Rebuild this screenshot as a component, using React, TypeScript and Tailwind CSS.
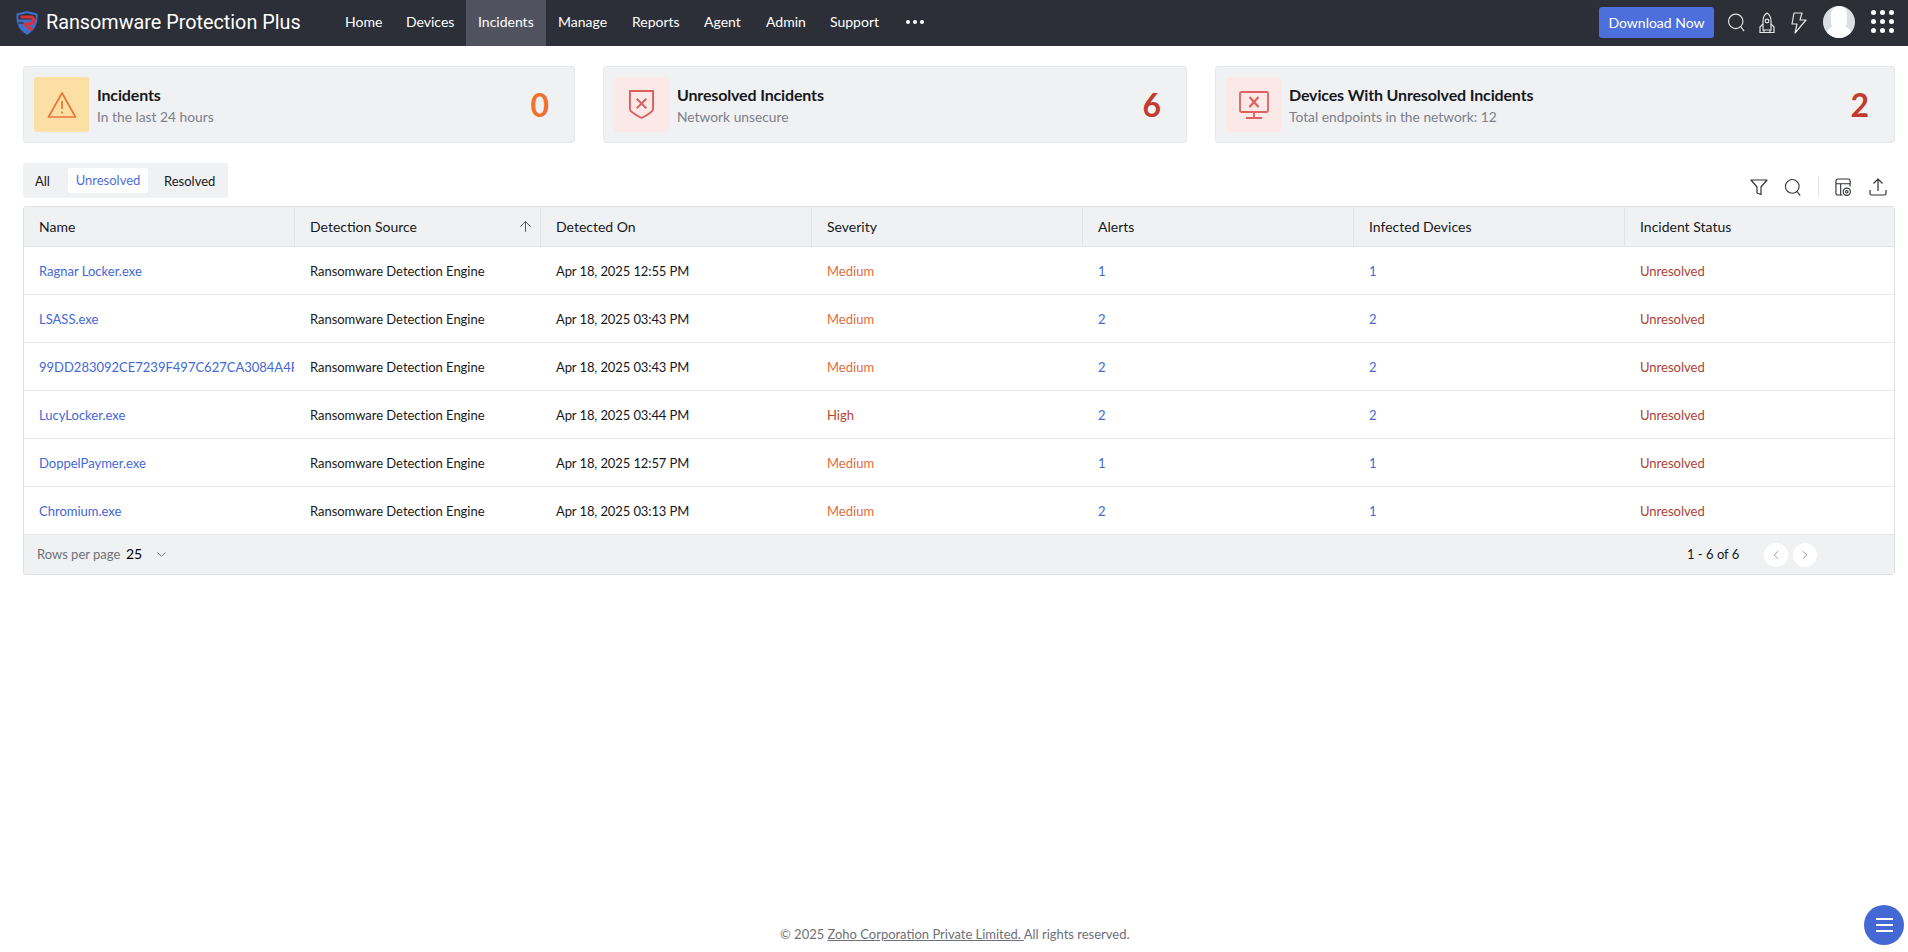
import React from "react";
import { ChevronDown, ChevronLeft, ChevronRight, ArrowUp } from "lucide-react";

const nav: [string, number][] = [["Home", 345], ["Devices", 406], ["Incidents", 478], ["Manage", 558], ["Reports", 632], ["Agent", 704], ["Admin", 766], ["Support", 830]];

const rows = [
  ["Ragnar Locker.exe", "Apr 18, 2025 12:55 PM", "Medium", "1", "1"],
  ["LSASS.exe", "Apr 18, 2025 03:43 PM", "Medium", "2", "2"],
  ["99DD283092CE7239F497C627CA3084A4F", "Apr 18, 2025 03:43 PM", "Medium", "2", "2"],
  ["LucyLocker.exe", "Apr 18, 2025 03:44 PM", "High", "2", "2"],
  ["DoppelPaymer.exe", "Apr 18, 2025 12:57 PM", "Medium", "1", "1"],
  ["Chromium.exe", "Apr 18, 2025 03:13 PM", "Medium", "2", "1"],
];

const cols = ["Name", "Detection Source", "Detected On", "Severity", "Alerts", "Infected Devices", "Incident Status"];
const widths = ["w-[270px]", "w-[246px]", "w-[271px]", "w-[271px]", "w-[271px]", "w-[271px]", "w-[271px]"];

function Search({ className }: { className: string }) {
  return (
    <svg viewBox="0 0 20 20" fill="none" stroke="currentColor" strokeWidth="1.2" className={className}>
      <circle cx="9.2" cy="8.8" r="7.6" />
      <path d="M14.6 14.6 18 19" />
    </svg>
  );
}

function StatCard({ x, w, boxBg, icon, title, sub, value, valueColor }: { x: string; w: string; boxBg: string; icon: React.ReactNode; title: string; sub: string; value: string; valueColor: string }) {
  return (
    <div className={`absolute top-[66px] h-[77px] ${x} ${w} rounded-[3px] border border-[#e6e8eb] bg-[#f0f1f3]`}>
      <div className={`absolute left-[10px] top-[10px] flex h-[55px] w-[55px] items-center justify-center rounded-[3px] ${boxBg}`}>{icon}</div>
      <div className="absolute left-[73px] top-[17px] text-[16px] leading-[22px] font-bold tracking-[-0.15px] text-[#17181c]">{title}</div>
      <div className="absolute left-[73px] top-[40px] text-[13.8px] leading-[20px] text-[#7d808a]">{sub}</div>
      <div className={`absolute right-[25px] top-[18px] text-[32px] leading-[40px] font-bold ${valueColor}`}>{value}</div>
    </div>
  );
}

export default function App() {
  return (
    <div className="relative h-[952px] w-[1908px] overflow-hidden bg-white text-[13px] text-[#17181c] [font-family:Lato,sans-serif]">
      <header className="absolute left-0 top-0 h-[46px] w-full bg-[#2c2f38] text-white">
        <svg viewBox="0 0 24 26" className="absolute left-[15px] top-[10px] h-[26px] w-[24px]" fill="none">
          <path d="M1.500 3.500 12 1l10.500 2.500c.6 9-1.500 16-10.500 21.500C3 19.500.900 12.500 1.500 3.500Z" fill="#3f6fc9" />
          <path d="M3.500 5.200 12 3.200l8.500 2c.2 1.500.2 3 .1 4.400H3.400c-.1-1.400-.1-2.900.1-4.400Z" fill="#2c2f38" />
          <path d="M5.500 7h10.500c3.500 0 3.500 6 0 6.500l-6 .7 7 5.800" stroke="#d8323c" strokeWidth="3" strokeLinejoin="round" />
          <path d="M3.500 13h5" stroke="#2c2f38" strokeWidth="1.300" />
        </svg>
        <div className="absolute left-[46px] top-[9px] text-[19.8px] leading-[28px] font-normal [font-family:Roboto,sans-serif]">Ransomware Protection Plus</div>
        <div className="absolute left-[466px] top-0 h-[46px] w-[80px] bg-[#50535f]" />
        {nav.map(([n, x]) => (
          <div key={n} className="absolute top-[12px] text-[14px] leading-[20px]" style={{ left: x }}>{n}</div>
        ))}
        <div className="absolute left-[906px] top-[20px] flex gap-[3px]">
          <span className="h-[4px] w-[4px] rounded-full bg-white" />
          <span className="h-[4px] w-[4px] rounded-full bg-white" />
          <span className="h-[4px] w-[4px] rounded-full bg-white" />
        </div>
        <div className="absolute left-[1599px] top-[7px] flex h-[31px] w-[115px] items-center justify-center rounded-[3px] bg-[#4d6fdc] text-[14px]">Download Now</div>
        <Search className="absolute left-[1727px] top-[12px] h-[21px] w-[19px] text-[#e4e5e9]" />
        <svg viewBox="0 0 18 22" fill="none" stroke="#e4e5e9" strokeWidth="1.200" className="absolute left-[1758px] top-[12px] h-[22px] w-[18px]">
          <path d="M9 1c3 2 4 5 4 8v9H5V9c0-3 1-6 4-8Z" />
          <circle cx="9" cy="9" r="1.800" />
          <path d="M5 12 2 15v5.500h14V15l-3-3M6 18v2.500M12 18v2.500" />
        </svg>
        <svg viewBox="0 0 16 22" fill="none" stroke="#e4e5e9" strokeWidth="1.200" className="absolute left-[1791px] top-[12px] h-[22px] w-[16px]">
          <path d="M11 1 3 1 1 12h5L4 21 15 8H9l2-7Z" strokeLinejoin="round" />
        </svg>
        <div className="absolute left-[1823px] top-[6px] h-[32px] w-[32px] overflow-hidden rounded-full bg-[#dcdee6]">
          <div className="absolute left-[8px] top-[0px] h-[24px] w-[16px] rounded-full bg-white" />
          <div className="absolute left-[3px] top-[20px] h-[20px] w-[26px] rounded-full bg-white" />
        </div>
        <div className="absolute left-[1871px] top-[10px] grid grid-cols-3 gap-x-[4px] gap-y-[4px]">
          {Array.from({ length: 9 }).map((_, i) => (
            <span key={i} className="h-[5px] w-[5px] rounded-full bg-white" />
          ))}
        </div>
      </header>

      <StatCard x="left-[23px]" w="w-[552px]" boxBg="bg-[#fbdfa5]" title="Incidents" sub="In the last 24 hours" value="0" valueColor="text-[#f0712c]"
        icon={
          <svg viewBox="0 0 30 28" fill="none" stroke="#ea7434" strokeWidth="1.700" strokeLinejoin="round" className="h-[28px] w-[30px]">
            <path d="M15 2 28.500 26h-27L15 2Z" />
            <path d="M15 10v8M15 20.500v2" />
          </svg>
        } />
      <StatCard x="left-[603px]" w="w-[584px]" boxBg="bg-[#fbe9e8]" title="Unresolved Incidents" sub="Network unsecure" value="6" valueColor="text-[#c23b2e]"
        icon={
          <svg viewBox="0 0 28 32" fill="none" stroke="#d9605f" strokeWidth="2" className="h-[31px] w-[27px]">
            <path d="M2 2h24v19c0 3-6 6-12 9C8 27 2 24 2 21V2Z" />
            <path d="m9 10 10 10M19 10 9 20" />
          </svg>
        } />
      <StatCard x="left-[1215px]" w="w-[680px]" boxBg="bg-[#fbe9e8]" title="Devices With Unresolved Incidents" sub="Total endpoints in the network: 12" value="2" valueColor="text-[#c23b2e]"
        icon={
          <svg viewBox="0 0 30 28" fill="none" stroke="#e0605f" strokeWidth="1.800" className="h-[28px] w-[30px]">
            <rect x="1" y="1" width="28" height="20" rx="1.500" />
            <path d="m10.500 6 9 10M19.500 6l-9 10" strokeWidth="2.200" />
            <path d="M15 21v6M7 27h16" />
          </svg>
        } />

      <div className="absolute left-[23px] top-[163px] h-[35px] w-[205px] rounded-[3px] bg-[#f0f1f3]">
        <div className="absolute left-[12px] top-[9px] leading-[19px]">All</div>
        <div className="absolute left-[45px] top-[5px] flex h-[25px] w-[80px] items-center justify-center rounded-[3px] bg-white pt-[1px] text-[#4d6fdc]">Unresolved</div>
        <div className="absolute left-[141px] top-[9px] leading-[19px]">Resolved</div>
      </div>

      <svg viewBox="0 0 18 18" fill="none" stroke="#30323a" strokeWidth="1.200" className="absolute left-[1750px] top-[178px] h-[18px] w-[18px]">
        <path d="M1 2h16l-6 7v7.500L7 15V9L1 2Z" strokeLinejoin="round" />
      </svg>
      <Search className="absolute left-[1784px] top-[178px] h-[19px] w-[18px] text-[#30323a]" />
      <div className="absolute left-[1818px] top-[176px] h-[21px] w-px bg-[#e3e4e8]" />
      <svg viewBox="0 0 18 20" fill="none" stroke="#30323a" strokeWidth="1.200" className="absolute left-[1835px] top-[178px] h-[19px] w-[17px]">
        <path d="M8 18H3a2 2 0 0 1-2-2V3a2 2 0 0 1 2-2h11a2 2 0 0 1 2 2v6M1 6h15M6 6v12" />
        <circle cx="12.500" cy="14.500" r="3.800" />
        <circle cx="12.500" cy="14.500" r="1.300" />
      </svg>
      <svg viewBox="0 0 20 20" fill="none" stroke="#30323a" strokeWidth="1.200" className="absolute left-[1868px] top-[177px] h-[20px] w-[20px]">
        <path d="M10 14V2M5.500 6.500 10 2l4.500 4.500M2 13v3.500A1.500 1.500 0 0 0 3.500 18h13a1.500 1.500 0 0 0 1.500-1.500V13" />
      </svg>

      <div className="absolute left-[23px] top-[206px] h-[369px] w-[1872px] overflow-hidden rounded-[3px] border border-[#dfe1e5]">
        <div className="flex h-[40px] border-b border-[#e3e4e8] bg-[#f0f1f3]">
          {cols.map((c, i) => (
            <div key={c} className={`relative flex h-full shrink-0 items-center px-[15px] text-[14px] ${widths[i]} ${i > 0 ? "border-l border-[#e3e4e8]" : ""}`}>
              {c}
              {i === 1 && <ArrowUp strokeWidth={1.100} className="absolute right-[6px] top-[11px] h-[17px] w-[17px] text-[#30323a]" />}
            </div>
          ))}
        </div>
        {rows.map((r, i) => (
          <div key={i} className="flex h-[48px] items-center border-b border-[#e9eaed] pt-[2px] last:border-b-0">
            <div className="w-[270px] shrink-0 overflow-hidden whitespace-nowrap pl-[15px] text-[#4367d8]">{r[0]}</div>
            <div className="w-[246px] shrink-0 pl-[16px] tracking-[-0.03px]">Ransomware Detection Engine</div>
            <div className="w-[271px] shrink-0 pl-[16px] tracking-[-0.1px]">{r[1]}</div>
            <div className={`w-[271px] shrink-0 pl-[16px] ${r[2] === "High" ? "text-[#b3482f]" : "text-[#e06d3c]"}`}>{r[2]}</div>
            <div className="w-[271px] shrink-0 pl-[16px] text-[#4367d8]">{r[3]}</div>
            <div className="w-[271px] shrink-0 pl-[16px] text-[#4367d8]">{r[4]}</div>
            <div className="w-[271px] shrink-0 pl-[16px] text-[#ab4234]">Unresolved</div>
          </div>
        ))}
        <div className="absolute bottom-0 left-0 h-[40px] w-full border-t border-[#e3e4e8] bg-[#f0f1f3]">
          <div className="absolute left-[13px] top-[10px] leading-[19px] text-[#6e7079]">Rows per page</div>
          <div className="absolute left-[102px] top-[9px] text-[14px] leading-[20px] text-black">25</div>
          <ChevronDown strokeWidth={1.200} className="absolute left-[130px] top-[12px] h-[15px] w-[15px] text-[#50535f]" />
          <div className="absolute left-[1663px] top-[10px] leading-[19px]">1 - 6 of 6</div>
          <div className="absolute left-[1740px] top-[8px] flex h-[24px] w-[24px] items-center justify-center rounded-full bg-white"><ChevronLeft strokeWidth={1} className="h-[14px] w-[14px] text-[#50535f]" /></div>
          <div className="absolute left-[1769px] top-[8px] flex h-[24px] w-[24px] items-center justify-center rounded-full bg-white"><ChevronRight strokeWidth={1} className="h-[14px] w-[14px] text-[#50535f]" /></div>
        </div>
      </div>

      <div className="absolute left-[780px] top-[924px] whitespace-nowrap text-[12.97px] leading-[20px] text-[#6e7079]">© 2025 <span className="underline">Zoho Corporation Private Limited. </span>All rights reserved.</div>

      <div className="absolute left-[1864px] top-[905px] flex h-[40px] w-[40px] flex-col items-center justify-center gap-[4px] rounded-full bg-[#4569d4]">
        <span className="h-[2px] w-[17px] bg-white" />
        <span className="h-[2px] w-[17px] bg-white" />
        <span className="h-[2px] w-[17px] bg-white" />
      </div>
    </div>
  );
}
